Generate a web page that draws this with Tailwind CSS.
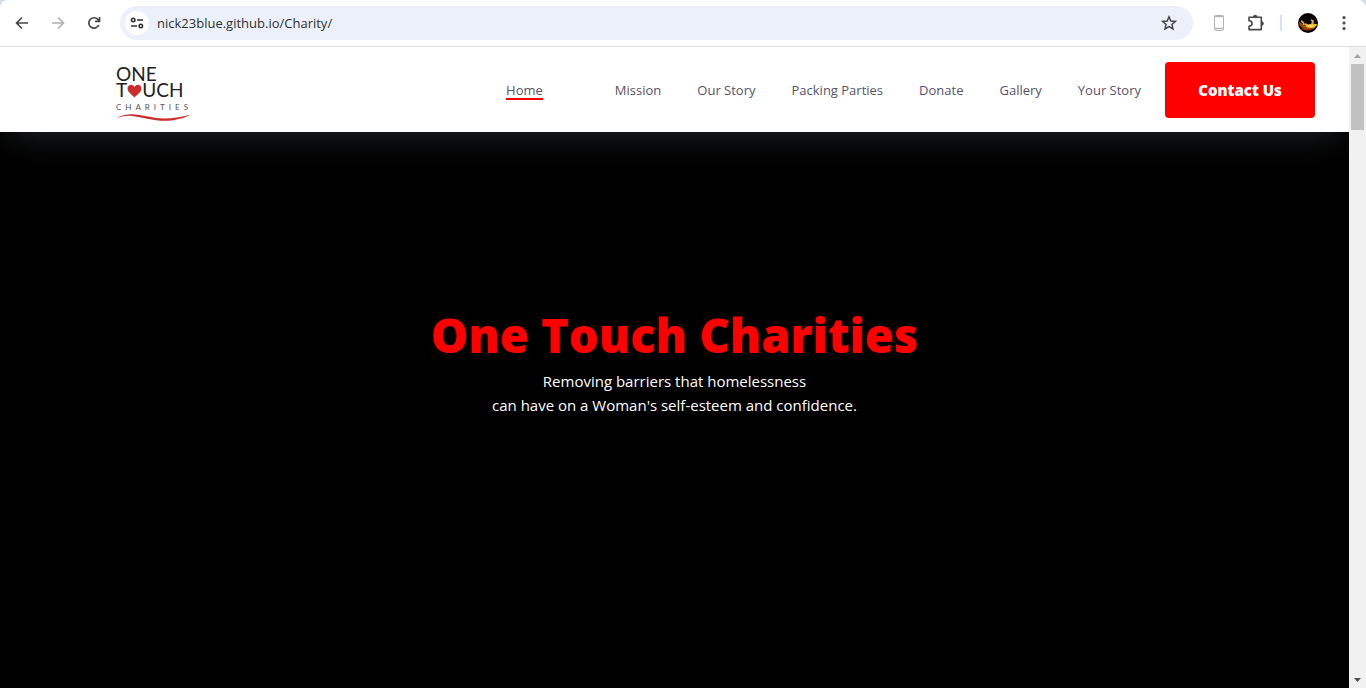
<!DOCTYPE html>
<html lang="en">
<head>
<meta charset="utf-8">
<meta name="viewport" content="width=device-width, initial-scale=1">
<title>One Touch Charities</title>
<script src="https://cdn.jsdelivr.net/npm/@tailwindcss/browser@4"></script>
</head>
<body class="flex h-screen flex-col overflow-hidden bg-black font-['Segoe_UI','Open_Sans',sans-serif]">

<!-- Browser toolbar -->
<div class="shrink-0 bg-[#d5dbe3]">
  <div class="flex h-[47px] items-center rounded-t-lg border-b border-[#dcdcdc] bg-white pl-2 pr-[10px] text-[#474747]">
    <button type="button" aria-label="Back" class="flex size-7 items-center justify-center">
      <svg viewBox="0 0 16 16" class="size-4" fill="none" stroke="currentColor" stroke-width="1.7"><path d="M14 8H3M8 2.5 2.5 8 8 13.5"/></svg>
    </button>
    <button type="button" aria-label="Forward" class="ml-2 flex size-7 items-center justify-center text-[#b0b0b0]">
      <svg viewBox="0 0 16 16" class="size-4" fill="none" stroke="currentColor" stroke-width="1.7"><path d="M2 8h11M8 2.5 13.5 8 8 13.5"/></svg>
    </button>
    <button type="button" aria-label="Reload" class="ml-2 flex size-7 items-center justify-center">
      <svg viewBox="0 0 16 16" class="size-4" fill="none" stroke="currentColor" stroke-width="1.7"><path d="M12.8 10A5.2 5.2 0 1 1 12.3 5L13.5 6.3M13.5 2V6.400H9.100"/></svg>
    </button>
    <div class="ml-3 flex h-[34px] flex-1 items-center rounded-full bg-[#ebf0fa] pl-[5px] pr-3">
      <button type="button" aria-label="View site information" class="flex size-6 shrink-0 items-center justify-center rounded-full bg-white text-[#303030]">
        <svg viewBox="0 0 14 12" class="h-3 w-3.5" fill="none" stroke="currentColor" stroke-width="1.6"><circle cx="3.2" cy="3" r="1.7"/><path d="M7 3h6M1 9h6"/><circle cx="10.8" cy="9" r="1.7"/></svg>
      </button>
      <label for="url" class="sr-only">Address</label>
      <input id="url" type="text" value="nick23blue.github.io/Charity/" class="ml-2 h-6 min-w-0 flex-1 bg-transparent text-[13px] leading-6 text-[#303030] outline-none">
      <button type="button" aria-label="Bookmark this tab" class="flex size-6 items-center justify-center">
        <svg viewBox="0 0 16 16" class="size-4" fill="none" stroke="currentColor" stroke-width="1.5"><path d="m8 1.8 1.8 4.2 4.6.4-3.5 3 1.1 4.5L8 11.5l-4 2.4 1.1-4.5-3.5-3 4.6-.4z"/></svg>
      </button>
    </div>
    <button type="button" aria-label="Device" class="ml-[14px] flex size-6 items-center justify-center">
      <svg viewBox="0 0 12 18" class="h-[18px] w-3" fill="none" stroke="#b4b4b4"><rect x="1.5" y="1.5" width="9" height="15" rx="1"/><path d="M1.5 2.500h9M1.500 14.500h9" stroke-width="1.500"/></svg>
    </button>
    <button type="button" aria-label="Extensions" class="ml-[13px] flex size-6 items-center justify-center">
      <svg viewBox="0 0 18 18" class="size-[18px]"><path d="M2 3.300h12.300v12.300H2v-3.400c2.200-.2 3-1.300 3-2.700S4.200 7 2 6.800z" fill="none" stroke="currentColor" stroke-width="1.6" stroke-linejoin="round"/><path d="M6.300 3a1.900 1.900 0 0 1 3.800 0zM14.600 7.600a1.900 1.900 0 0 1 0 3.800z" fill="currentColor" stroke="currentColor" stroke-width=".6"/></svg>
    </button>
    <span class="ml-3 h-4 w-0.5 bg-[#d3e3fd]"></span>
    <button type="button" aria-label="Profile" class="ml-4 size-5">
      <svg viewBox="0 0 20 20" class="size-5"><circle cx="10" cy="10" r="10" fill="#080300"/><path d="M1 9q3 1 5 3l5 0q3-1 3-4l2 0v3l3 0q-1 5-7 6-7 1-11-6z" fill="#984a0b"/><path d="M3 8q3 1 3 4M13 7l2 1-1 3M7 11l3 1" stroke="#e3a56a" stroke-width="1.5" fill="none"/><path d="M7 13q5-3 12-2-1 4-6 4-4 0-6-2z" fill="#f2c01a"/><path d="M10 13h5" stroke="#fff2a0"/><path d="M4 16q5 2 10 0" stroke="#a32b08" fill="none"/></svg>
    </button>
    <button type="button" aria-label="Menu" class="ml-[14px] flex size-6 items-center justify-center">
      <svg viewBox="0 0 4 16" class="h-4 w-1" fill="currentColor"><circle cx="2" cy="2.5" r="1.6"/><circle cx="2" cy="8" r="1.6"/><circle cx="2" cy="13.5" r="1.6"/></svg>
    </button>
  </div>
</div>

<div class="flex min-h-0 flex-1">
  <div class="flex min-w-0 flex-1 flex-col overflow-hidden">
    <header class="z-10 flex shrink-0 items-center bg-white pt-[15px] pb-[14px] pl-[116px] pr-[34px] shadow-[0_10px_36px_-10px_#282b30]">
      <!-- Logo -->
      <a href="#" aria-label="One Touch Charities" class="flex h-14 w-[76px] flex-col font-['Lato',sans-serif] text-[#222]">
        <span class="mt-1 text-[19px] leading-4">ONE</span>
        <span class="flex items-center text-[19px] leading-4">T<svg viewBox="0 0 14 13" class="mt-0.5 h-[14px] w-[15px]" fill="#cb2d2d"><path d="M7 12.500C4 9.500.5 7.500.5 4.200.5 1.800 2.200.6 3.800.6 5.400.6 6.500 1.500 7 2.800 7.500 1.500 8.600.6 10.200.6c1.600 0 3.300 1.200 3.300 3.600C13.500 7.500 10 9.500 7 12.500z"/></svg>UCH</span>
        <span class="mt-[3px] flex w-[72px] justify-between text-[8px] leading-3 text-[#555]"><span>C</span><span>H</span><span>A</span><span>R</span><span>I</span><span>T</span><span>I</span><span>E</span><span>S</span></span>
        <svg viewBox="0 0 76 8" class="h-2 w-[76px] shrink-0" fill="#cb2d2d"><path d="M0 6C8-.5 19 .5 32 3.500S58 6 75 1.500C60 9 47 9 31 5.800S9 1 0 6z"/></svg>
      </a>
      <nav class="ml-auto flex items-center gap-9 text-[13px] leading-4 text-[#57536a]">
        <a href="#" class="mr-9 border-b-2 border-[#f00] pt-0.5">Home</a>
        <a href="#">Mission</a>
        <a href="#">Our Story</a>
        <a href="#">Packing Parties</a>
        <a href="#">Donate</a>
        <a href="#">Gallery</a>
        <a href="#">Your Story</a>
      </nav>
      <button type="button" class="ml-6 h-14 w-[150px] rounded bg-[#f00] text-[15px] font-extrabold text-white">Contact Us</button>
    </header>
    <main class="flex flex-1 flex-col items-center bg-black pt-[173px] text-center">
      <h1 class="text-[47px] font-extrabold leading-[60px] text-[#f00]">One Touch Charities</h1>
      <p class="mt-1 text-[15px] leading-6 text-white">Removing barriers that homelessness<br>can have on a Woman's self-esteem and confidence.</p>
    </main>
  </div>
  <!-- Page scrollbar -->
  <div class="flex w-[17px] flex-col items-center bg-[#f1f1f1]" aria-hidden="true">
    <div class="flex h-[17px] items-center"><svg viewBox="0 0 7 4" class="h-1 w-[7px]" fill="#a3a3a3"><path d="M0 4 3.500 0 7 4z"/></svg></div>
    <div class="h-[66px] w-[13px] bg-[#c1c1c1]"></div>
    <div class="mt-auto flex h-[17px] items-center"><svg viewBox="0 0 7 4" class="h-1 w-[7px]" fill="#505050"><path d="M0 0 3.500 4 7 0z"/></svg></div>
  </div>
</div>
</body>
</html>
